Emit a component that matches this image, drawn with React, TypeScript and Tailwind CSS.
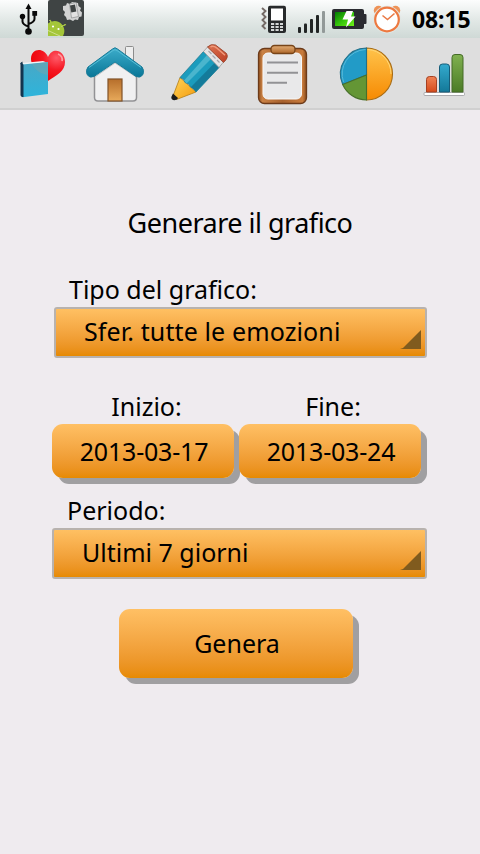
import type { ReactNode } from "react";

function UsbIcon() {
  return (
    <svg width="20" height="34" viewBox="18 2 20 34" className="ml-[18px]" fill="none" stroke="#0a0a0a" strokeWidth="2">
      <path d="M28.500 8v23M28.500 26.500q-6-2-6-5v-5M28.500 24q6-2 6-5v-5" />
      <path d="M28.500 3.500l3 5.500h-6z" fill="#0a0a0a" stroke="none" />
      <circle cx="22.500" cy="16.500" r="2.700" fill="#0a0a0a" stroke="none" />
      <rect x="32.300" y="11" width="4.800" height="4.800" fill="#0a0a0a" stroke="none" />
      <circle cx="28.500" cy="31.500" r="3.300" fill="#0a0a0a" stroke="none" />
    </svg>
  );
}

function DebugIcon() {
  return (
    <svg width="36" height="36" viewBox="48 0 36 36" className="mb-0.5 ml-[10px]">
      <rect x="48" y="0" width="36" height="36" rx="2" fill="#3f4444" />
      <path
        d="M63 6l3-.5 1-2.500 3 1 2-2 6 1 .5 3 2.500 2-1 2.500 2 2-.5 4-2.500.5-1 3-3-.5-2 1.500-3-1.500-3 .5-1-3-2-2 1-3-2-2z"
        fill="#d2d3d3"
      />
      <path d="M69.500 4l6.500-1.500 2.500 14-7 1.500z" fill="#e2e2e2" stroke="#8c8f8f" strokeWidth=".7" />
      <path d="M70 5.500l5-1 1.300 7-5 1z" fill="#3f4444" />
      <path d="M48 23.500c4-3.500 10-3.500 13 0 3.500 3.500 4.500 8 2 12.500H48z" fill="#a4c639" />
      <path d="M48 30.500l12 5.500M49.500 20l2 3M65.500 24.500l-4 2" stroke="#cfe08c" strokeWidth="1" fill="none" />
      <path d="M50 20l2 3.500M66 24.500l-4 1.500" stroke="#a4c639" strokeWidth="1.300" />
      <circle cx="53" cy="26.500" r="1.100" fill="#fff" />
      <circle cx="58.500" cy="29" r="1.100" fill="#fff" />
    </svg>
  );
}

function VibrateIcon() {
  return (
    <svg width="26" height="30" viewBox="260 4 26 30">
      <path d="M262 8l3.500 3-3 3 3 3-3 3 3 3-3 3 3 3" fill="none" stroke="#746a66" strokeWidth="1.900" />
      <rect x="268" y="5.700" width="18" height="27.300" rx="2" fill="#282a2b" />
      <rect x="271" y="8.500" width="12" height="12" fill="#fff" />
      <path d="M271 23h3.200v2H271zM275.500 23h3.200v2h-3.200zM280 23h3v2h-3zM271 26h3.200v2H271zM275.500 26h3.200v2h-3.200zM280 26h3v2h-3zM271 29h3.200v2H271zM275.500 29h3.200v2h-3.200zM280 29h3v2h-3z" fill="#d5d8d8" />
    </svg>
  );
}

function SignalIcon() {
  return (
    <svg width="28" height="24" viewBox="298 10 28 24" className="mt-1.5 ml-3">
      <g fill="#222525">
        <rect x="298" y="27" width="3" height="6" rx="1" />
        <rect x="304" y="23.500" width="3" height="9.500" rx="1" />
        <rect x="310" y="19" width="3" height="14" rx="1" />
        <rect x="316" y="15" width="3" height="18" rx="1" />
      </g>
      <rect x="322" y="11" width="3" height="22" rx="1" fill="#929998" />
    </svg>
  );
}

function BatteryIcon() {
  return (
    <svg width="35" height="22" viewBox="332 8 35 22" className="ml-1.5">
      <defs>
        <linearGradient id="charge" x1="0" y1="0" x2="1" y2="1">
          <stop offset="0" stopColor="#047a04" />
          <stop offset=".55" stopColor="#39c80c" />
          <stop offset="1" stopColor="#6ff018" />
        </linearGradient>
      </defs>
      <rect x="332" y="9" width="32" height="20" rx="2" fill="#2a2b30" />
      <rect x="363" y="14" width="3.500" height="10" rx="1" fill="#2a2b30" />
      <rect x="335" y="12" width="19" height="14" fill="url(#charge)" />
      <path d="M346.500 11h6.500l-2 5.500h4.500l-9.500 11 2-8h-5.500z" fill="#fff" />
    </svg>
  );
}

function AlarmIcon() {
  return (
    <svg width="28" height="29" viewBox="373 5 28 29" className="ml-1.5">
      <circle cx="378.500" cy="10.500" r="4.700" fill="#ee9256" />
      <circle cx="395.500" cy="10.500" r="4.700" fill="#ee9256" />
      <circle cx="387" cy="19.500" r="13.800" fill="#e1e7e4" />
      <circle cx="387" cy="19.500" r="11.800" fill="#fff" stroke="#ed7940" strokeWidth="2.200" />
      <path d="M382.500 15.500l5 4 7-6" fill="none" stroke="#e97a46" strokeWidth="1.600" />
    </svg>
  );
}

function DiaryIcon() {
  return (
    <svg width="78" height="70" viewBox="0 38 78 70">
      <defs>
        <radialGradient id="heart" cx=".75" cy=".25" r=".8">
          <stop offset="0" stopColor="#ff5967" />
          <stop offset=".5" stopColor="#f51722" />
          <stop offset="1" stopColor="#ed0308" />
        </radialGradient>
        <linearGradient id="cover" x1="0" y1="0" x2="0" y2="1">
          <stop offset="0" stopColor="#48a8c6" />
          <stop offset="1" stopColor="#2eb4db" />
        </linearGradient>
      </defs>
      <path d="M48 81C44 75 31 69 31 59c0-11 13-12 17-2 5-11 17-6 17 5 0 9-8 13-17 19z" fill="url(#heart)" />
      <path d="M58 54c3 1 5 4 4 7" fill="none" stroke="#ff9b9e" strokeWidth="1.800" />
      <path d="M20.500 63l2-1.500V97l-2-1.500z" fill="#143047" />
      <path d="M22.500 63L43 61l5 2-24 3z" fill="#edf3f6" />
      <path d="M22.500 64.500L48 62v32l-25.500 3.200z" fill="url(#cover)" />
      <path d="M32 64l16-2v13c-7-1-12-4-16-11z" fill="#69a6b4" opacity=".65" />
      <path d="M21 63l1.500 2v32" fill="none" stroke="#123752" strokeWidth="2" />
    </svg>
  );
}

function HomeIcon() {
  return (
    <svg width="79" height="70" viewBox="78 38 79 70">
      <defs>
        <linearGradient id="roof" x1="0" y1="0" x2="0" y2="1">
          <stop offset="0" stopColor="#3dadcb" />
          <stop offset="1" stopColor="#087697" />
        </linearGradient>
        <linearGradient id="door" x1="0" y1="0" x2="0" y2="1">
          <stop offset="0" stopColor="#b66e2b" />
          <stop offset="1" stopColor="#e8aa5b" />
        </linearGradient>
      </defs>
      <rect x="125.500" y="46.500" width="8" height="17" rx="1" fill="#eee" stroke="#8c8c8c" />
      <path d="M94.500 69L115 55l21.500 14v28.500q0 3.500-3.500 3.500H98q-3.500 0-3.500-3.500z" fill="#f0f0f1" stroke="#929295" strokeWidth="1.500" />
      <path d="M95 77l20-14 21 14" fill="none" stroke="#c5c5c7" />
      <path d="M112.500 49q2.500-2.500 5 0L142 67q2.500 3 1 7.500-2.500 4-7 2L115 62 94 76.500q-4.500 2-7-2-1.500-4.500 1-7.500z" fill="url(#roof)" stroke="#187b98" />
      <path d="M89 67.500l24-17q2-1.500 4 0l24 17" fill="none" stroke="#57bed7" strokeWidth="1" />
      <rect x="108" y="79" width="14" height="22" fill="url(#door)" stroke="#805329" strokeWidth="1.200" />
    </svg>
  );
}

function PencilIcon() {
  return (
    <svg width="83" height="70" viewBox="157 38 83 70">
      <defs>
        <linearGradient id="tip" x1="0" y1="0" x2="1" y2="1">
          <stop offset="0" stopColor="#ffd458" />
          <stop offset="1" stopColor="#f49b0d" />
        </linearGradient>
        <linearGradient id="eraser" x1="0" y1="0" x2="1" y2="1">
          <stop offset="0" stopColor="#dd7452" />
          <stop offset="1" stopColor="#bd3f25" />
        </linearGradient>
      </defs>
      <path d="M173 96L180 77.500 196 92 176.500 99.500z" fill="url(#tip)" stroke="#b37d19" strokeWidth=".8" />
      <path d="M173 93.500l5 4.500q-.5 2-3.500 2.300-3.500-.3-3.200-3.300z" fill="#1b1b1b" />
      <path d="M180 77.500L203.500 51.500 219 67.500 196 92q-1.500-4-5.500-5-1-4-5.500-4.500 0-3.500-5-5z" fill="#1b9cbd" stroke="#267b91" strokeWidth=".8" />
      <path d="M184 80.500L207.500 54.500l4 4-25 25z" fill="#4ab5cd" />
      <path d="M191 87l24-24.500 4 5-23 24z" fill="#147b9a" />
      <path d="M203.500 51.500l4.500-5L223.500 62l-4.500 5.500z" fill="#e4e4e5" stroke="#999" strokeWidth=".8" />
      <path d="M208.500 51l3 3M212.500 55.500l3 3M217 60l2.500 2.500" stroke="#a5a5aa" strokeWidth="1.200" />
      <path d="M207.500 47q3.500-3.500 8-2l11 8.500q2.500 4-3 9z" fill="url(#eraser)" stroke="#99442c" strokeWidth=".9" />
      <path d="M210.500 46.800q3-1.500 6 1l8.500 7.500" fill="none" stroke="#f09a7b" strokeWidth="1.500" />
    </svg>
  );
}

function ClipboardIcon() {
  return (
    <svg width="84" height="70" viewBox="240 38 84 70">
      <defs>
        <linearGradient id="board" x1="0" y1="0" x2="1" y2="0">
          <stop offset="0" stopColor="#925120" />
          <stop offset=".08" stopColor="#ca8245" />
          <stop offset=".5" stopColor="#a7612d" />
          <stop offset=".92" stopColor="#c87b3c" />
          <stop offset="1" stopColor="#874a1c" />
        </linearGradient>
        <linearGradient id="clip" x1="0" y1="0" x2="0" y2="1">
          <stop offset="0" stopColor="#e3ae77" />
          <stop offset="1" stopColor="#ae6628" />
        </linearGradient>
      </defs>
      <rect x="258.500" y="48.500" width="48" height="55" rx="6" fill="url(#board)" stroke="#6c3a19" strokeWidth="1.300" />
      <rect x="263" y="53" width="38.500" height="46" rx="5" fill="#e9e9ea" stroke="#f8f8f8" strokeWidth="1" />
      <path d="M267 62.500h31M267 72.800h31M267 82.800h20" stroke="#929295" strokeWidth="2" />
      <rect x="271" y="45.500" width="24" height="8" rx="3.500" fill="url(#clip)" stroke="#774418" strokeWidth="1.300" />
    </svg>
  );
}

function PieIcon() {
  return (
    <svg width="84" height="70" viewBox="324 38 84 70">
      <defs>
        <linearGradient id="half" x1="0" y1="0" x2="0" y2="1">
          <stop offset="0" stopColor="#ffc34b" />
          <stop offset="1" stopColor="#f68a02" />
        </linearGradient>
      </defs>
      <path d="M366.500 48a26 26 0 0 1 0 52z" fill="url(#half)" stroke="#a76c15" strokeWidth="1.100" />
      <path d="M366.500 48a26 26 0 0 0-23.800 36.500L366.500 75z" fill="#229bc7" stroke="#236f88" strokeWidth="1.100" />
      <path d="M366.500 75l-23.800 9.500A26 26 0 0 0 366.500 100z" fill="#649635" stroke="#47702a" strokeWidth="1.100" />
      <path d="M365.500 49.500A24.500 24.500 0 0 0 343.500 82" fill="none" stroke="#57bad9" />
      <path d="M367.500 49.500A24.500 24.500 0 0 1 391 74" fill="none" stroke="#ffd778" />
    </svg>
  );
}

function BarsIcon() {
  return (
    <svg width="72" height="70" viewBox="408 38 72 70">
      <defs>
        <linearGradient id="green" x1="0" y1="0" x2="0" y2="1">
          <stop offset="0" stopColor="#80b150" />
          <stop offset="1" stopColor="#4b7b26" />
        </linearGradient>
        <linearGradient id="blue" x1="0" y1="0" x2="0" y2="1">
          <stop offset="0" stopColor="#34aace" />
          <stop offset="1" stopColor="#137898" />
        </linearGradient>
        <linearGradient id="red" x1="0" y1="0" x2="0" y2="1">
          <stop offset="0" stopColor="#f08355" />
          <stop offset="1" stopColor="#d64a1a" />
        </linearGradient>
      </defs>
      <rect x="424" y="92.500" width="40.500" height="3" rx="1" fill="#fff" stroke="#99999e" strokeWidth=".8" />
      <path d="M426.500 92V79.500q0-3 3-3h4q3 0 3 3V92z" fill="url(#red)" stroke="#a64021" />
      <path d="M439.500 92V67q0-3 3-3h4q3 0 3 3v25z" fill="url(#blue)" stroke="#165c78" />
      <path d="M452 92V57.500q0-3 3-3h5q3 0 3 3V92z" fill="url(#green)" stroke="#456b27" />
    </svg>
  );
}

function Spinner({ children, className }: { children: ReactNode; className: string }) {
  return (
    <button
      className={`flex h-[51px] items-center justify-between rounded-[3px] border-2 border-[#b8b2ae] bg-linear-to-b from-[#ffc062] to-[#e78a00] pr-1 pb-[3px] pl-7 text-left ${className}`}
    >
      {children}
      <svg width="21" height="19" viewBox="0 0 21 19" className="mt-4">
        <path d="M21 0v19H0l3-1z" fill="#805b1e" />
      </svg>
    </button>
  );
}

const raised = "rounded-[11px] bg-linear-to-b from-[#ffc064] to-[#e78a00] shadow-[6px_6px_0_#a09fa1]";

export default function App() {
  return (
    <div className="flex h-[854px] w-[480px] flex-col overflow-hidden bg-[#efebef] font-['Noto_Sans','Open_Sans',sans-serif] text-[25px] leading-[34px] text-black">
      <header className="flex h-[38px] shrink-0 items-center bg-linear-to-b from-[#fcfdfd] via-[#e3e9e7] to-[#cfd9d6]">
        <UsbIcon />
        <DebugIcon />
        <div className="ml-auto flex items-center pr-[9px]">
          <VibrateIcon />
          <SignalIcon />
          <BatteryIcon />
          <AlarmIcon />
          <span className="ml-[11px] w-[59px] text-[23px] font-bold tracking-[-0.1px] whitespace-nowrap">08:15</span>
        </div>
      </header>

      <nav className="flex h-[72px] shrink-0 border-b-2 border-[#d0d0d0] bg-[#dedede]">
        <DiaryIcon />
        <HomeIcon />
        <PencilIcon />
        <ClipboardIcon />
        <PieIcon />
        <BarsIcon />
      </nav>

      <main className="flex flex-col">
        <h1 className="mt-[96px] text-center text-[27px] tracking-[-0.5px]">
          <span>Generare il grafico</span>
        </h1>

        <label className="mt-8 mb-px ml-[69px]">
          <span>Tipo del grafico:</span>
        </label>
        <Spinner className="ml-[54px] w-[373px]">
          <span className="tracking-[0.12px]">Sfer. tutte le emozioni</span>
        </Spinner>

        <div className="mt-[31px] ml-[52px] flex w-[374px] gap-[5px]">
          <div className="flex w-[182px] flex-col text-center">
            <label className="mb-px pl-[7px]">
              <span>Inizio:</span>
            </label>
            <button className={`h-[54px] pl-0.5 tracking-[-0.2px] ${raised}`}>
              <span>2013-03-17</span>
            </button>
          </div>
          <div className="flex w-[182px] flex-col text-center">
            <label className="mb-px pl-1.5">
              <span>Fine:</span>
            </label>
            <button className={`h-[54px] pl-0.5 tracking-[-0.2px] ${raised}`}>
              <span>2013-03-24</span>
            </button>
          </div>
        </div>

        <label className="mt-[15px] mb-px ml-[67px]">
          <span>Periodo:</span>
        </label>
        <Spinner className="ml-[52px] w-[375px]">
          <span>Ultimi 7 giorni</span>
        </Spinner>

        <button className={`mt-[30px] ml-[119px] h-[69px] w-[234px] pb-0.5 pl-0.5 ${raised}`}>
          <span>Genera</span>
        </button>
      </main>
    </div>
  );
}
